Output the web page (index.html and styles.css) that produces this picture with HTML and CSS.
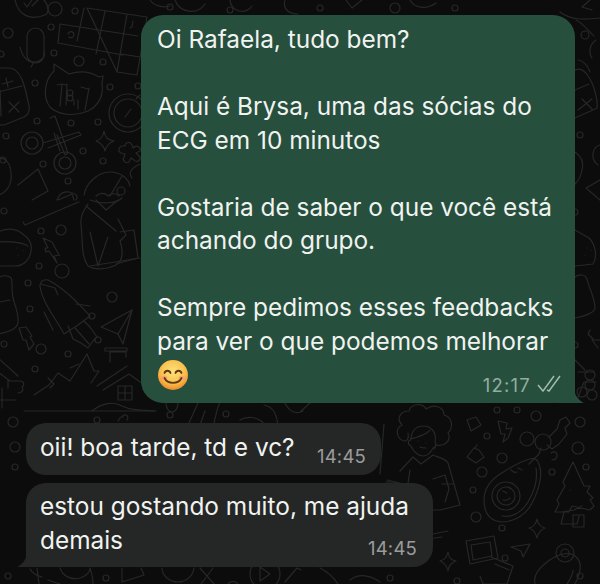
FILE: index.html
```html
<!DOCTYPE html>
<html lang="pt">
<head>
    <meta charset="UTF-8">
    <title>Conversa</title>
    <link rel="stylesheet" href="styles.css">
</head>
<body>
    <svg class="doodles" width="600" height="584" viewBox="0 0 600 584" fill="none">
        <!-- circles scattered over the wallpaper -->
        <g>
            <circle cx="55" cy="9" r="7"/><circle cx="75" cy="11" r="3"/><circle cx="51" cy="27" r="3"/>
            <circle cx="8" cy="33" r="5"/><circle cx="1" cy="54" r="3"/><circle cx="54" cy="53" r="3"/>
            <circle cx="79" cy="61" r="5"/><circle cx="103" cy="62" r="3"/><circle cx="35" cy="83" r="3"/>
            <circle cx="110" cy="87" r="3"/><circle cx="138" cy="86" r="3"/><circle cx="37" cy="121" r="3"/>
            <circle cx="71" cy="123" r="3"/><circle cx="98" cy="122" r="3"/><circle cx="6" cy="136" r="3"/>
            <circle cx="83" cy="151" r="3"/><circle cx="43" cy="164" r="3"/><circle cx="103" cy="161" r="3"/>
            <circle cx="68" cy="181" r="3"/><circle cx="4" cy="211" r="3"/><circle cx="41" cy="231" r="3"/>
            <circle cx="61" cy="230" r="5"/><circle cx="39" cy="266" r="3"/><circle cx="62" cy="271" r="7"/>
            <circle cx="28" cy="283" r="3"/><circle cx="30" cy="309" r="3"/><circle cx="112" cy="297" r="5"/>
            <circle cx="92" cy="316" r="3"/><circle cx="98" cy="340" r="3"/><circle cx="4" cy="344" r="3"/>
            <circle cx="41" cy="349" r="5"/><circle cx="68" cy="354" r="3"/><circle cx="35" cy="369" r="3"/>
            <circle cx="13" cy="422" r="5"/><circle cx="97" cy="420" r="3"/><circle cx="226" cy="414" r="3"/>
            <circle cx="8" cy="576" r="3"/><circle cx="106" cy="578" r="3"/><circle cx="15" cy="447" r="5"/>
            <circle cx="15" cy="467" r="3"/><circle cx="497" cy="410" r="3"/><circle cx="517" cy="410" r="3"/>
            <circle cx="536" cy="416" r="5"/><circle cx="487" cy="436" r="3"/><circle cx="527" cy="439" r="7"/>
            <circle cx="578" cy="448" r="6"/><circle cx="502" cy="458" r="5"/><circle cx="482" cy="472" r="5"/>
            <circle cx="552" cy="472" r="3"/><circle cx="586" cy="467" r="3"/><circle cx="473" cy="490" r="3"/>
            <circle cx="476" cy="517" r="5"/><circle cx="502" cy="528" r="3"/><circle cx="505" cy="558" r="3"/>
            <circle cx="580" cy="422" r="5"/><circle cx="390" cy="578" r="3"/><circle cx="457" cy="581" r="3"/>
            <circle cx="580" cy="576" r="3"/><circle cx="170" cy="7" r="3"/><circle cx="230" cy="10" r="3"/>
            <circle cx="320" cy="8" r="3"/><circle cx="395" cy="8" r="5"/><circle cx="455" cy="8" r="3"/>
            <circle cx="585" cy="35" r="4"/><circle cx="580" cy="135" r="3"/><circle cx="575" cy="212" r="3"/>
            <circle cx="575" cy="345" r="3"/><circle cx="170" cy="415" r="3"/>
        </g>
        <!-- top row, cut by the green bubble -->
        <path d="M15 0C18 15 30 21 45 15C50 13 48 4 44 0M24 3l3 4 5-7M32 6l7-7"/>
        <path d="M175 0a17 17 0 0 0 30 4M150 0a16 12 0 0 0 20 6"/>
        <path d="M230 0a12 12 0 0 0 22 6M285 0c-3 10 5 14 13 14M346 0l6 8 10-8M410 0c4 8 16 10 26 3"/>
        <path d="M560 12c10 8 24 8 40 6M590 0l-8 7 10 3"/>
        <!-- mic -->
        <rect x="27" y="28" width="17" height="35" rx="8.5"/>
        <path d="M20 47c2 10 8 15 14 15s12-5 10-10M34 62l-3 5"/>
        <!-- crossword -->
        <path d="M87 8l60 9-10 58-20-3zM60 24l78 12M60 24l-2 19 65 12M140 57l-19-3M105 11l-9 43M127 14l-10 58M84 8l-7 33"/>
        <path d="M68 34a3 3 0 1 1 1 3M133 21l-1 6-2 1"/>
        <!-- cat face -->
        <path d="M54 64l15 10c12-4 22-2 30 3l4-1-1 8c2 12-4 22-14 27-14 6-30 4-38-4-8-10-5-28 4-36z"/>
        <path d="M57 85l5-1-2 22M67 84l-1 21M89 88l-4 22M74 105v-5M78 100v9M62 84l5 1M81 87l7 2"/>
        <circle cx="70" cy="93" r="3"/><circle cx="70" cy="98" r="3"/>
        <!-- tablet with marks -->
        <path d="M-3 68h12c12 0 16 18 20 38 1 6-1 9-5 11l-20 8c-3 0-5 0-7-1"/>
        <path d="M-2 92l24-6M6 78l2 9M2 84l11-3M9 102l10 10M19 102l-10 10M0 90l1 26"/>
        <!-- clock -->
        <circle cx="128" cy="113" r="19"/><circle cx="128" cy="113" r="14"/>
        <path d="M125 117l6-8M136 99l4-4"/>
        <!-- scissors -->
        <circle cx="32" cy="143" r="11"/><circle cx="32" cy="143" r="6"/><circle cx="65" cy="163" r="11"/><circle cx="65" cy="163" r="6"/>
        <path d="M43 143l36-11 2 3-33 13M50 118l5-2 13 37-3 2-8-20M60 151l-6-18"/>
        <!-- star and plus -->
        <path d="M104 131c1 6 3 9 10 10-6 2-8 6-9 10-1-5-4-8-9-10 5-1 7-5 8-10z"/>
        <path d="M125 146c0-4 5-5 7-1l1 3c4-4 9 0 7 3l-4 2 4 4c1 4-4 6-6 3l-3-2-2 4c-4 2-7-2-5-5l1-3-4-1c-4-2-2-7 2-7z"/>
        <!-- santa -->
        <path d="M84 195c2-12 14-23 26-23s19 8 20 14M122 176l-12 20M96 196c4-4 10-3 12 0 3-3 8-3 11 0M90 200c10 4 26 4 32-2"/>
        <circle cx="121" cy="191" r="4"/>
        <!-- hat and glasses -->
        <path d="M18 185l20-16 10 22-16 9M-1 158c10 0 13 10 12 22-1 7-6 13-12 15"/>
        <circle cx="3" cy="160" r="3"/>
        <path d="M57 200c2-6 6-9 12-8s10 4 7 8"/>
        <path d="M132 178c-3-4-3-9 8-14"/>
        <!-- taco -->
        <path d="M-2 232c10-5 20-3 26 3 6 4 8 10 7 16-1 8-7 15-16 15H-2M-2 242c10-1 24 0 30 4M18 255h.1M23 250h.1M17 248h.1"/>
        <!-- lightning -->
        <path d="M43 238l9 4 7 13 1 0-6 1 3 7-8-12-3 1-1-4 3 0z"/>
        <path d="M19 328l7-1 6 9-2 1 4 7-5 6-3-10-3 0z"/>
        <!-- person at the top of the second block -->
        <path d="M25 225l44-19 10-4M23 222l2 3M58 200l14-6 2 6M88 204c-4 6-8 12-7 20 2 20 0 32 7 42 6 4 18 4 28-1 6-4 8-12 4-24l6-6-8-16"/>
        <path d="M90 232l8 34 10-29M96 200l10 10 12-10M120 232l14-2 4 28-22 6M86 206l30 25"/>
        <path d="M90 266l50-8"/>
        <!-- rocket -->
        <path d="M40 286c0-5 5-8 10-5 18 10 32 26 40 35l-12 9-14 9c-8-15-22-32-24-48z"/>
        <path d="M41 284l14 4 3 7M90 306l-14-2M44 312l9 18M68 326l5 13 8 4 7 5 5-7 4-4-7-10-6-6M75 328l14 16"/>
        <!-- paper plane -->
        <path d="M132 310l-31 17 17 7 5 10z"/><path d="M118 334l14-24"/>
        <!-- hand -->
        <path d="M-2 278c4-3 10-3 13 0 2 2 0 10 2 20 2 8 6 16 5 24 0 6-9 10-20 12M10 300l-10 2"/>
        <!-- mountains and house -->
        <path d="M-2 358l20 18M-2 372l12 9h10c4 0 5 4 2 6 2 3 0 6-4 6M2 388v20M8 380v8M0 400h16"/>
        <path d="M34 395l15-10 9-12 12 8 17-27 7 17 5 0-8 12M48 378l6 6-4 4M24 411h130M70 368l9-4"/>
        <path d="M97 386l30-20M103 390l26-16 14 10M110 362v-10h16v5M105 351h22v-3h-22z"/>
        <path d="M118 386h14v14h-14zM125 386v14M118 393h14"/>
        <path d="M92 411c10-8 22-10 30-5 8 4 16 4 34 5"/>
        <!-- under green bubble -->
        <path d="M166 403a6 9 0 0 0 12 0M188 425l10-22M200 425l5-14M212 430c4-12 4-20 8-28M240 420c6-4 18-4 24 4M264 405c10 2 13 10 14 22M300 412l10-9M285 403c4 8 10 12 18 8"/>
        <path d="M118 421c2-4 4-5 5-4M122 417a3 3 0 1 1 5 3"/>
        <!-- woman with afro -->
        <path d="M402 425c-6-6-2-14 7-14 2-8 14-8 17-2 8-6 18-2 18 6 8 2 10 12 4 18 4 8-4 14-12 12l-2 4M402 425c-8 4-5 14 2 16 6 0 4-8 4-8"/>
        <path d="M411 446c-4-2-3-6 0-6 0-8 4-14 12-14s14 6 12 16c2 2 0 6-2 6-2 4-6 8-10 8s-10-4-12-10z"/>
        <path d="M410 439c8-2 16-4 20-9M418 441h.1M426 443h.1M420 447c2 1 4 1 6 1M400 471l13-14 8 7 12-9c4 2 12 3 15 8l12 42-20 5-10 0"/>
        <path d="M433 479l12-4 4 14-4 13M442 484l12 0M386 482l10 0M410 470l-3 20"/>
        <!-- under second bubble -->
        <path d="M448 531l-20 4-16 4M428 539l14-2"/>
        <!-- avocado -->
        <path d="M538 462c6 10 1 28-6 41-6 12-18 19-30 19-12-1-18-8-18-22s10-22 16-26c10-6 18-12 30-15 4-1 7 0 8 3z"/>
        <path d="M536 468c2 12-2 24-8 34-6 10-16 16-26 14"/>
        <circle cx="506" cy="496" r="14"/><circle cx="506" cy="496" r="9"/>
        <path d="M518 468l4 2M511 470c2 2 4 3 6 2M503 491l4 2M508 487l3 2M503 500c3 1 5 0 7-2"/>
        <!-- key -->
        <circle cx="543" cy="442" r="8"/><path d="M549 437l8-8 3-9 6-3 4 6-5 5 2 6-8 10-7 5-5-4M541 448l-2 6-6 6-4 4"/>
        <path d="M551 453c3-2 6-1 6 2s-2 5-5 5"/>
        <!-- lightning right -->
        <path d="M498 421l9 2-1 6 6-1-4 10-5 4 2-8-4 0z"/>
        <!-- small boxes -->
        <path d="M467 420l9-3 5 8-10 6zM474 448l5 2 5 7-8 6-9-6zM475 448l2-3"/>
        <!-- pine -->
        <path d="M573 462l11 24 6 0-3 6 6 6-3 2 4 6-4 4-18-4-3 6-5 0-3 12h16l2-8M573 462l-10 20 2 4-8 14 2 4-4 8 12 0M562 512l12-2 8-4M570 490h.1"/>
        <rect x="573" y="515" width="11" height="12"/>
        <!-- right column -->
        <path d="M576 20c6 2 15 14 18 16M578 60c4 0 10 5 12 12"/>
        <path d="M596 40c-6 4-8 12-4 18M600 145c-8 2-10 14-2 20M600 180l-14 8 14 12"/>
        <path d="M575 70c6-3 10 1 13 6 6 8 10 24 9 32-8 4-14 6-22 10M575 90l14-6M578 110l14-11M582 99l10 10"/>
        <path d="M575 152c6 4 9 10 7 18-1 6-3 10-7 14"/>
        <path d="M575 230l14 8c6 6 9 18 4 26l-18 2M585 255h.1M591 250h.1M587 248h.1"/>
        <path d="M575 277c4-3 10-3 12 2 2 10 8 18 8 30-2 4-12 8-20 9M590 330l-2 4 6 6 6 0M592 340l6 8"/>
        <path d="M575 360l10 10M578 372h16M576 402l8-20h12"/>
        <circle cx="590" cy="375" r="5"/><circle cx="590" cy="385" r="5"/><circle cx="582" cy="392" r="5"/><circle cx="592" cy="395" r="5"/>
        <!-- frames, plane, star, rocket at the bottom -->
        <path d="M466 541l28-5 4 22-28 6zM471 545l19-3 2 14-19 4z"/>
        <path d="M491 557l22 9-6 18h-24l-3-8M495 564l14 6"/>
        <path d="M530 544l-19 3 10 4 2 6z"/>
        <path d="M448 552c1 6 3 8 8 9-5 2-7 4-8 10-1-5-3-8-8-10 5-1 7-4 8-9zM537 519c1 5 3 8 8 9-5 2-7 5-8 10-1-5-3-8-8-10 5-1 7-4 8-9z"/>
        <path d="M535 584c-2-8 4-16 12-22 10-8 24-12 30-4 6 6 3 16-2 26"/>
        <circle cx="565" cy="553" r="9"/><circle cx="565" cy="553" r="4"/>
        <path d="M567 584c4-6 6-10 6-14"/>
        <!-- strip under the third bubble -->
        <path d="M30 569c3 6 8 7 12 8M37 568l2 16M48 580l12 4M60 568c3 9 12 12 20 10 6-2 10-6 10-10M90 568c2 6 3 10 3 16M122 568v14l22-7-3-7"/>
        <path d="M162 568c0 8 8 14 16 14 8 0 15-6 16-14M200 568l14 16M213 568l-12 16M228 584a6 6 0 0 1 10 0"/>
        <circle cx="265" cy="574" r="15"/><path d="M260 567l10 7-10 7zM285 582l12-14 4 2"/>
        <path d="M320 568c8 4 14 10 18 16M350 580c8-6 18-6 30 2"/>
        <path d="M384 424l-4 50M387 480l16 4"/>
    </svg>

    <main class="chat">
        <div class="row row-out">
            <div class="bubble bubble-out">
                <p>Oi Rafaela, tudo bem?</p>
                <p>Aqui é Brysa, uma das sócias do<br>ECG em 10 minutos</p>
                <p>Gostaria de saber o que você está<br>achando do grupo.</p>
                <p>Sempre pedimos esses feedbacks<br>para ver o que podemos melhorar</p>
                <div class="last-line">
                    <svg class="emoji" width="32" height="32" viewBox="0 0 32 32">
                        <defs>
                            <radialGradient id="face" cx="50%" cy="38%" r="62%">
                                <stop offset="0" stop-color="#fde37c"/>
                                <stop offset="0.65" stop-color="#f9bf4d"/>
                                <stop offset="1" stop-color="#ee8a2a"/>
                            </radialGradient>
                        </defs>
                        <circle cx="16" cy="16" r="15" fill="url(#face)"/>
                        <ellipse cx="7" cy="19" rx="3.4" ry="2.2" fill="#f59a72" opacity=".7"/>
                        <ellipse cx="25" cy="19" rx="3.4" ry="2.2" fill="#f59a72" opacity=".7"/>
                        <g fill="none" stroke="#5d3a12" stroke-width="1.8" stroke-linecap="round">
                            <path d="M7.5 14c1-3 5-3 6 0M18.5 14c1-3 5-3 6 0"/>
                            <path d="M7.5 19c3 6.500 14 6.500 17 0"/>
                        </g>
                    </svg>
                    <span class="meta meta-out">12:17
                        <svg class="ticks" width="24" height="18" viewBox="0 0 24 18" fill="none">
                            <path d="M1 10l5 6L17 1M10 15l2 1L23 1"/>
                        </svg>
                    </span>
                </div>
            </div>
            <svg class="tail-out" width="30" height="22" viewBox="0 0 30 22"><path d="M20 0V12C21 16 25 20 29 22H0V10Z"/></svg>
        </div>

        <div class="bubble bubble-in first">
            <span class="msg">oii! boa tarde, td e vc?</span>
            <span class="meta meta-in">14:45</span>
        </div>
        <div class="row row-in">
            <svg class="tail-in" width="30" height="22" viewBox="0 0 30 22"><path d="M30 0H9V12C8 16 4 20 0 22H30Z"/></svg>
            <div class="bubble bubble-in second">
                <span class="msg">estou gostando muito, me ajuda<br>demais</span>
                <span class="meta meta-in meta-end">14:45</span>
            </div>
        </div>
    </main>
</body>
</html>
```

FILE: styles.css
```css
html, body {
    margin: 0;
    padding: 0;
}
body {
    position: relative;
    width: 600px;
    height: 584px;
    overflow: hidden;
    background: #0c0c0c;
    font-family: 'Inter', 'Liberation Sans', sans-serif;
    color: #f0f3f0;
}
.doodles {
    position: absolute;
    top: 0;
    left: 0;
    stroke: #272727;
    stroke-width: 1.2;
    stroke-linecap: round;
    stroke-linejoin: round;
}
.chat {
    position: relative;
    display: flex;
    flex-direction: column;
    padding: 15px 0 0 26px;
}
.row {
    display: flex;
}
.row-out {
    margin-left: 115px;
    align-items: flex-end;
}
.bubble p {
    margin: 0 0 33.55px;
}
.bubble {
    box-sizing: border-box;
    font-size: 24.4px;
    line-height: 33.55px;
}
.bubble-out {
    flex: none;
    width: 434px;
    height: 388px;
    padding: 8px 16px 0;
    background: #264f3e;
    border-radius: 22px;
}
.bubble-out p:nth-child(4) {
    margin-bottom: 0;
}
.tail-out {
    flex: none;
    margin-left: -20px;
    fill: #264f3e;
}
.last-line {
    display: flex;
    justify-content: space-between;
    align-items: flex-start;
    margin-top: 1px;
}
.emoji {
    display: block;
}
.meta {
    font-size: 18.5px;
    line-height: 22px;
}
.meta-out {
    display: flex;
    align-items: center;
    gap: 6px;
    margin: 15px -2px 0 0;
    letter-spacing: 1.2px;
    color: #93ad9f;
}
.ticks {
    stroke: #a3baae;
    stroke-width: 1.5;
    margin-top: -2px;
}
.bubble-in {
    display: flex;
    background: #252726;
    border-radius: 20px;
}
.first {
    width: 355px;
    height: 52px;
    margin-top: 20px;
    padding: 8px 15px 0 14px;
    justify-content: space-between;
}
.row-in {
    margin: 8px 0 0 -9px;
    align-items: flex-end;
}
.tail-in {
    flex: none;
    margin-right: -21px;
    fill: #252726;
}
.second {
    flex: none;
    display: block;
    position: relative;
    width: 407px;
    height: 84px;
    padding: 7px 14px 0;
}
.msg {
    display: block;
}
.meta-in {
    margin: 14px 0 0;
    letter-spacing: 0.2px;
    color: #9a9c9b;
}
.meta-end {
    position: absolute;
    right: 16px;
    bottom: 8px;
    margin: 0;
}
```
